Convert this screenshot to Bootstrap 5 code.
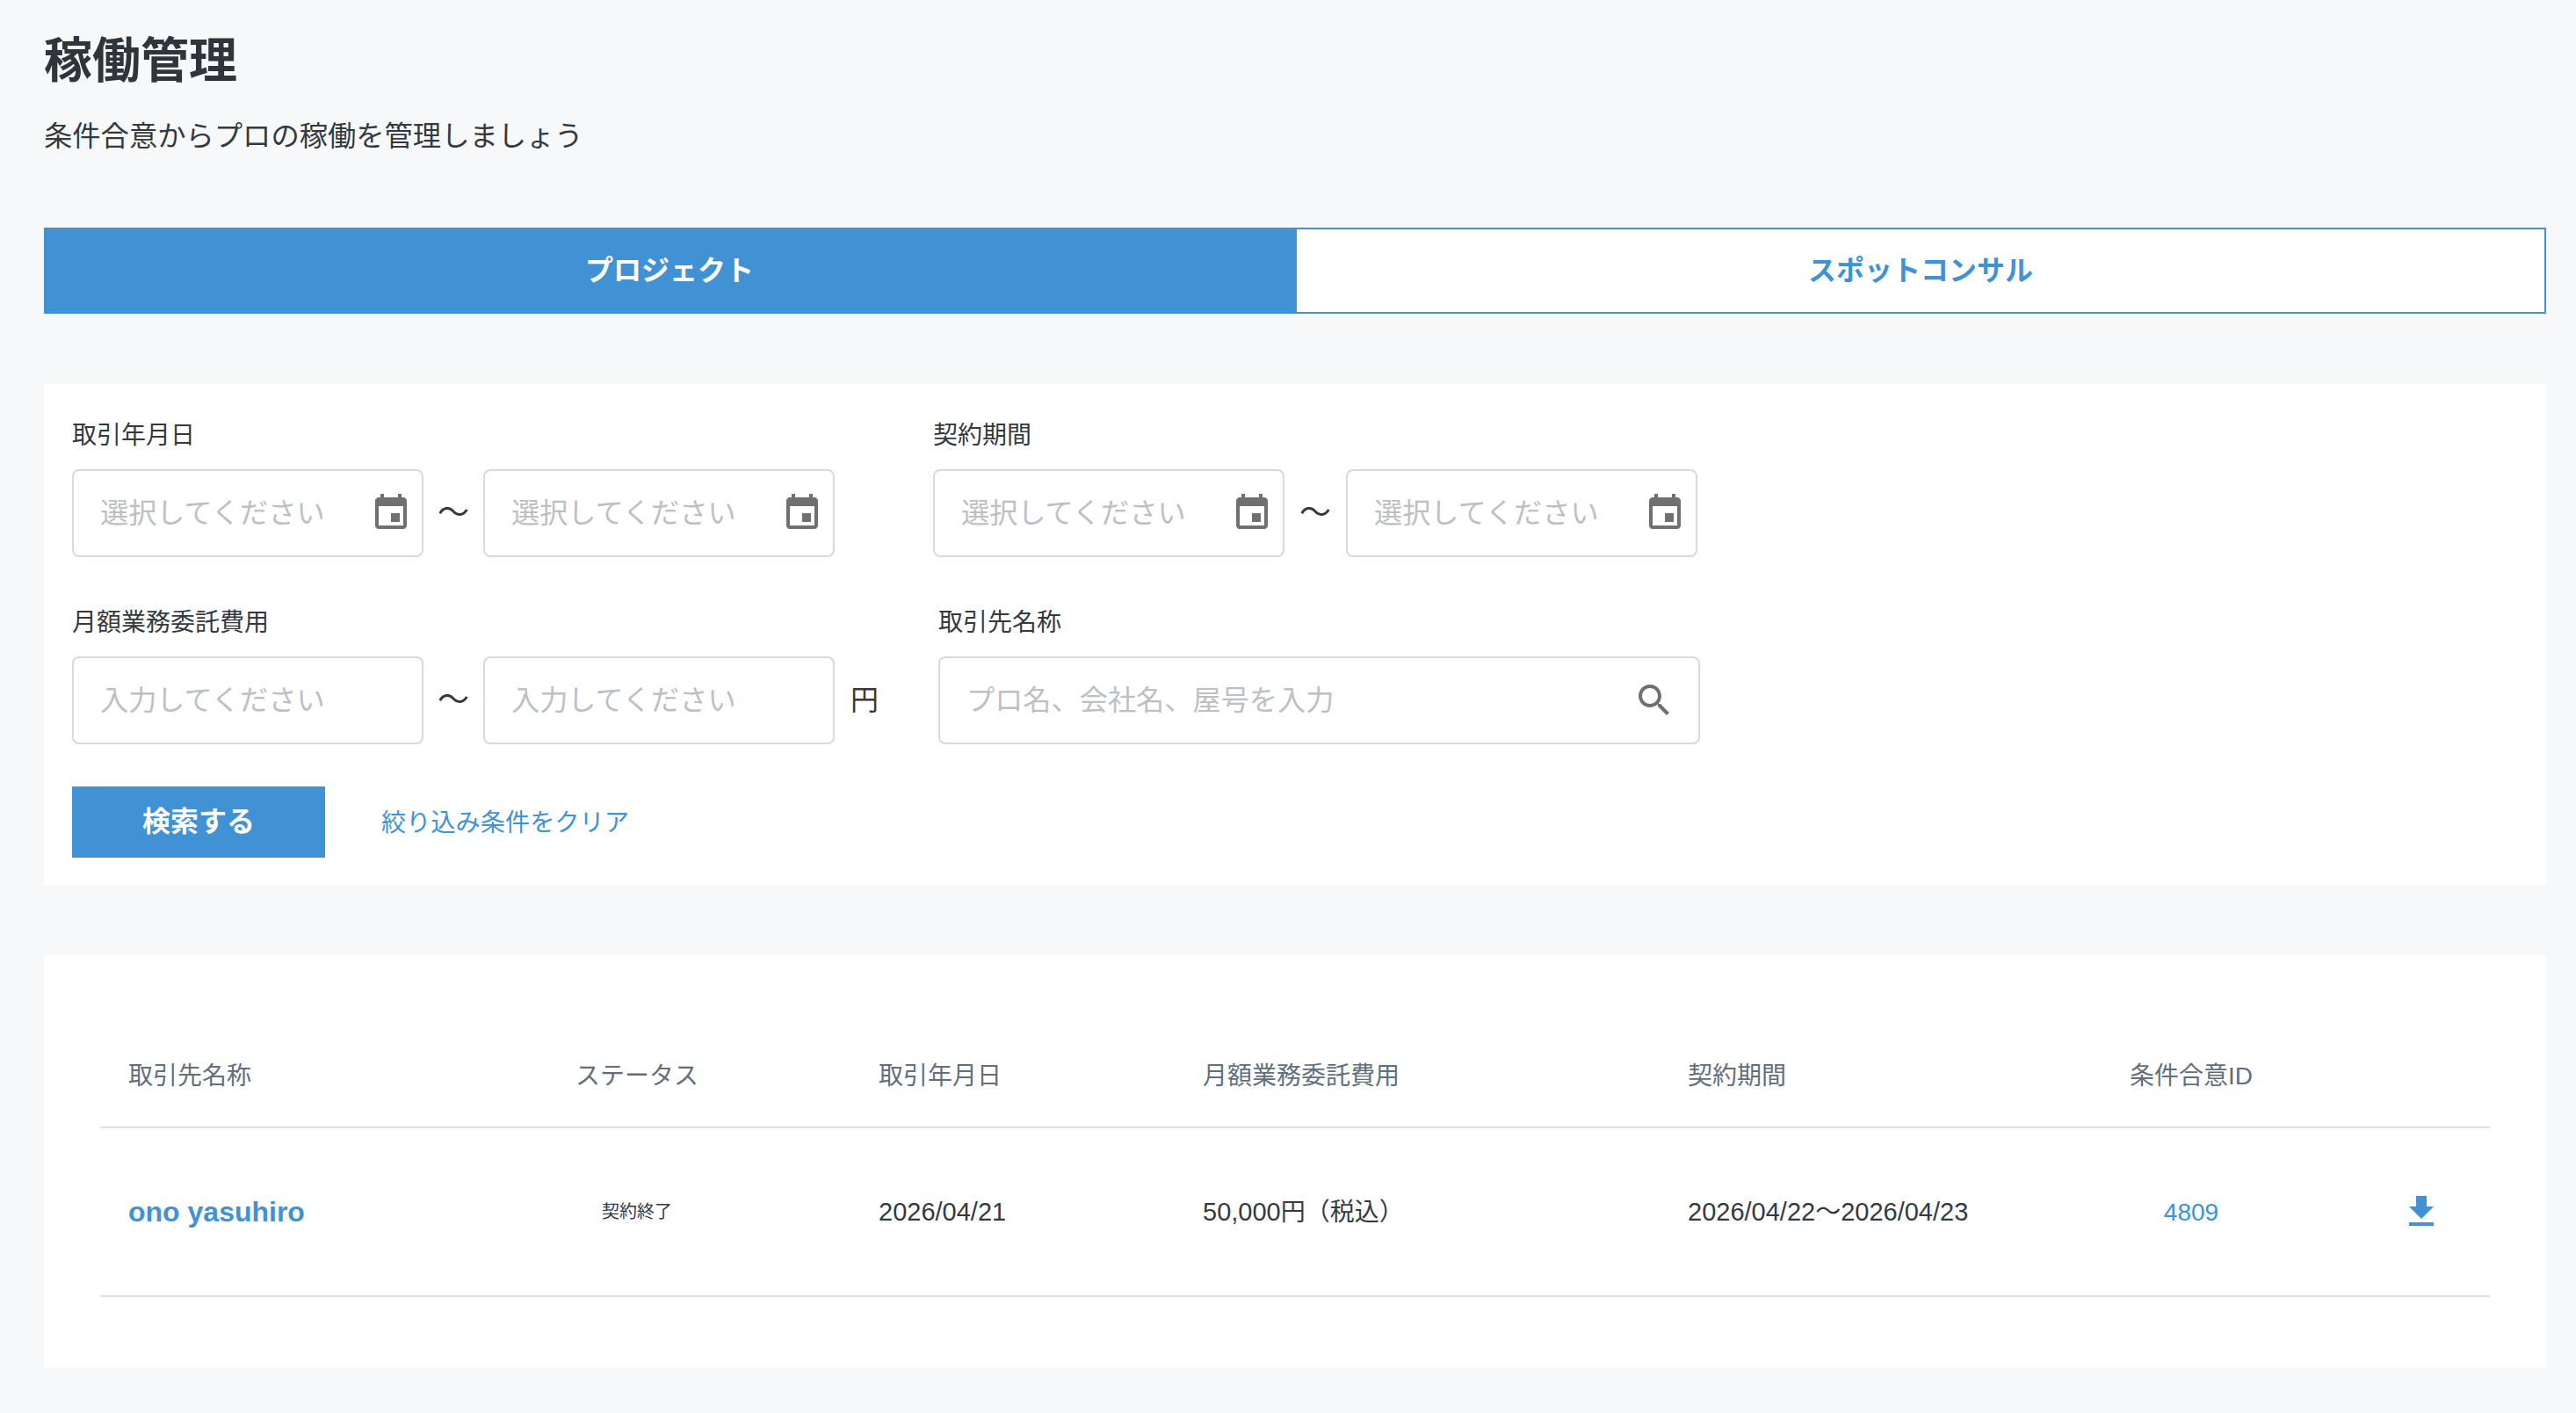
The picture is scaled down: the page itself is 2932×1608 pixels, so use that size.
<!DOCTYPE html>
<html lang="ja">
<head>
<meta charset="utf-8">
<title>稼働管理</title>
<link rel="stylesheet" href="https://cdn.jsdelivr.net/npm/bootstrap@5.3.0/dist/css/bootstrap.min.css">
<style>
html,body{height:100%}
body{background:#f7f8fa;color:#333a3f;font-family:"Liberation Sans","Noto Sans CJK JP",sans-serif;font-size:28px;line-height:42px}
.pg{padding:0 34px 0 50px}
.ttl{font-size:55px;font-weight:700;line-height:80px;margin:0;padding-top:29px;color:#2f353a}
.sub{font-size:32.3px;line-height:48px;margin:22px 0 0}
.tabbar{margin-top:80px;display:flex}
.tabbtn{flex:1 1 0;height:98px;border-radius:0;border:2px solid #4192d4;font-size:32px;font-weight:700;line-height:94px;padding:0;color:#4192d4;background:#fff}
.tabbtn.on{background:#4192d4;color:#fff}
.tabbtn:hover{background:#fff;color:#4192d4;border-color:#4192d4}
.tabbtn.on:hover{background:#4192d4;color:#fff}
.pan{background:#fff}
.filt{margin-top:80px;padding:38px 32px 31px}
.flbl{font-size:28px;line-height:42px;margin:0 0 17px;display:block;color:#333a3f}
.frow+.frow{margin-top:54px}
.frow{display:flex}
.fcolb{margin-left:67px}
.fcolb2{margin-left:112px}
.inwrap{position:relative;width:400px}
.inwrap.wide{width:867px}
.inp.form-control{height:100px;border:2px solid #d5dadf;border-radius:8px;padding:0 30px;font-size:32.2px;color:#333a3f;background:#fff;box-shadow:none}
.inp.form-control::placeholder{color:#bcc0c4;opacity:1}
.ico{position:absolute;width:48px;height:48px;top:26px;fill:#707070}
.cal{right:13px}
.mag{right:28px}
.tld{width:68px;text-align:center;font-size:36px;line-height:100px;color:#333a3f}
.tld.alt{width:70px}
.yen{width:33px;margin-left:18px;font-size:32px;line-height:100px}
.acts{margin-top:48px;gap:64px}
.srch.btn{width:288px;height:81px;border:0;border-radius:0;background:#4192d4;color:#fff;font-size:32px;font-weight:700;line-height:81px;padding:0}
.clr{color:#4192d4;text-decoration:none;font-size:28.2px}
.lst{margin-top:80px;padding:78px 64px 80px}
.tbl.table{margin:0;table-layout:fixed;width:2720px;--bs-table-bg:transparent;color:#333a3f}
.tbl th{font-weight:400;color:#5f6f7b;height:118px;padding:2px 0 0 32px;vertical-align:middle;border-bottom:2px solid #dedfe0;line-height:42px}
.tbl td{height:192px;padding:0 0 0 32px;vertical-align:middle;border-bottom:2px solid #dedfe0;color:#333a3f;font-size:29px}
.jp{font-size:28px}
.nm{font-size:32px;font-weight:700;color:#4192d4;text-decoration:none}
.ctr{width:140px;text-align:center}
.stt{font-size:20px}
.idl{color:#4192d4;text-decoration:none;font-size:28px}
.dl{display:block;width:48px;height:48px;margin:0 0 0 2px;fill:#4192d4}
</style>
</head>
<body>
<div class="pg">
  <h1 class="ttl">稼働管理</h1>
  <p class="sub">条件合意からプロの稼働を管理しましょう</p>

  <div class="tabbar">
    <button type="button" class="btn tabbtn on">プロジェクト</button>
    <button type="button" class="btn tabbtn">スポットコンサル</button>
  </div>

  <form class="pan filt">
    <div class="frow">
      <div>
        <label class="flbl">取引年月日</label>
        <div class="d-flex">
          <div class="inwrap"><input class="form-control inp" placeholder="選択してください">
            <svg class="ico cal" viewBox="0 0 24 24"><path d="M17 12h-5v5h5v-5zM16 1v2H8V1H6v2H5c-1.11 0-1.99.9-1.99 2L3 19c0 1.1.89 2 2 2h14c1.1 0 2-.9 2-2V5c0-1.1-.9-2-2-2h-1V1h-2zm3 18H5V8h14v11z"/></svg></div>
          <div class="tld">〜</div>
          <div class="inwrap"><input class="form-control inp" placeholder="選択してください">
            <svg class="ico cal" viewBox="0 0 24 24"><path d="M17 12h-5v5h5v-5zM16 1v2H8V1H6v2H5c-1.11 0-1.99.9-1.99 2L3 19c0 1.1.89 2 2 2h14c1.1 0 2-.9 2-2V5c0-1.1-.9-2-2-2h-1V1h-2zm3 18H5V8h14v11z"/></svg></div>
        </div>
      </div>
      <div class="fcolb2">
        <label class="flbl">契約期間</label>
        <div class="d-flex">
          <div class="inwrap"><input class="form-control inp" placeholder="選択してください">
            <svg class="ico cal" viewBox="0 0 24 24"><path d="M17 12h-5v5h5v-5zM16 1v2H8V1H6v2H5c-1.11 0-1.99.9-1.99 2L3 19c0 1.1.89 2 2 2h14c1.1 0 2-.9 2-2V5c0-1.1-.9-2-2-2h-1V1h-2zm3 18H5V8h14v11z"/></svg></div>
          <div class="tld alt">〜</div>
          <div class="inwrap"><input class="form-control inp" placeholder="選択してください">
            <svg class="ico cal" viewBox="0 0 24 24"><path d="M17 12h-5v5h5v-5zM16 1v2H8V1H6v2H5c-1.11 0-1.99.9-1.99 2L3 19c0 1.1.89 2 2 2h14c1.1 0 2-.9 2-2V5c0-1.1-.9-2-2-2h-1V1h-2zm3 18H5V8h14v11z"/></svg></div>
        </div>
      </div>
    </div>
    <div class="frow">
      <div>
        <label class="flbl">月額業務委託費用</label>
        <div class="d-flex">
          <div class="inwrap"><input class="form-control inp" placeholder="入力してください"></div>
          <div class="tld">〜</div>
          <div class="inwrap"><input class="form-control inp" placeholder="入力してください"></div>
          <div class="yen">円</div>
        </div>
      </div>
      <div class="fcolb">
        <label class="flbl">取引先名称</label>
        <div class="inwrap wide"><input class="form-control inp" placeholder="プロ名、会社名、屋号を入力">
          <svg class="ico mag" viewBox="0 0 24 24"><path d="M15.5 14h-.79l-.28-.27C15.41 12.59 16 11.11 16 9.5 16 5.91 13.09 3 9.5 3S3 5.91 3 9.5 5.91 16 9.5 16c1.61 0 3.09-.59 4.23-1.57l.27.28v.79l5 4.99L20.49 19l-4.99-5zm-6 0C7.01 14 5 11.99 5 9.5S7.01 5 9.5 5 14 7.01 14 9.5 11.99 14 9.5 14z"/></svg></div>
      </div>
    </div>
    <div class="d-flex align-items-center acts">
      <button type="button" class="btn srch">検索する</button>
      <a href="#" class="clr">絞り込み条件をクリア</a>
    </div>
  </form>

  <div class="pan lst">
    <table class="table tbl">
      <colgroup><col style="width:509px"><col style="width:345px"><col style="width:369px"><col style="width:552px"><col style="width:503px"><col style="width:306px"><col></colgroup>
      <thead>
        <tr><th>取引先名称</th><th><div class="ctr">ステータス</div></th><th>取引年月日</th><th>月額業務委託費用</th><th>契約期間</th><th><div class="ctr">条件合意ID</div></th><th></th></tr>
      </thead>
      <tbody>
        <tr>
          <td><a href="#" class="nm">ono yasuhiro</a></td>
          <td><div class="ctr stt">契約終了</div></td>
          <td>2026/04/21</td>
          <td>50,000<span class="jp">円（税込）</span></td>
          <td>2026/04/22〜2026/04/23</td>
          <td><div class="ctr"><a href="#" class="idl">4809</a></div></td>
          <td><svg class="dl" viewBox="0 0 24 24"><path d="M19 9h-4V3H9v6H5l7 7 7-7zM5 18v2h14v-2H5z"/></svg></td>
        </tr>
      </tbody>
    </table>
  </div>
</div>
<script src="https://cdn.jsdelivr.net/npm/bootstrap@5.3.0/dist/js/bootstrap.bundle.min.js"></script>
</body>
</html>
